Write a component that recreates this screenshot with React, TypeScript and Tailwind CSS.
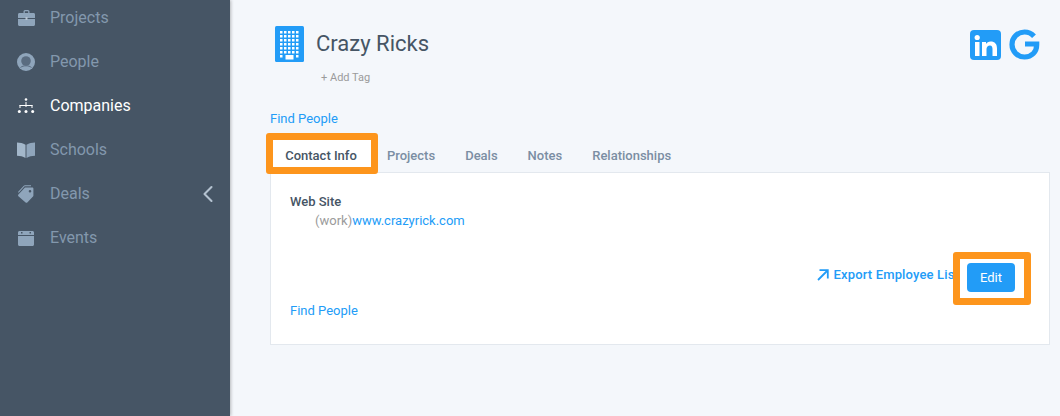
import { ChevronLeft } from "lucide-react";

function ProjectsIcon() {
  return (
    <svg width="17" height="16" viewBox="0 0 17 16" fill="#8fa5bb">
      <path d="M5.500 3V1.600C5.500.8 6.200 0 7 0h3c.8 0 1.500.8 1.500 1.600V3h-1.300V1.500a.3.3 0 0 0-.3-.3H7.100a.3.3 0 0 0-.3.3V3z" />
      <path d="M1.500 3h14c.8 0 1.500.6 1.500 1.400V8H0V4.400C0 3.600.7 3 1.500 3z" />
      <path d="M0 9h17v5.500c0 .8-.7 1.500-1.500 1.500h-14C.7 16 0 15.300 0 14.500z" />
      <rect x="7.500" y="7" width="2" height="3" fill="#b4c2d0" />
    </svg>
  );
}

function PeopleIcon() {
  return (
    <svg width="18" height="18" viewBox="0 0 18 18">
      <circle cx="9" cy="9" r="9" fill="#8fa5bb" />
      <circle cx="9" cy="8" r="4.800" fill="#5a6c80" />
      <path d="M3.500 14.500c1.500-1.300 3.400-1.700 5.500-1.700s4 .4 5.500 1.700" fill="none" stroke="#5a6c80" strokeWidth="1" />
    </svg>
  );
}

function CompaniesIcon() {
  return (
    <svg width="18" height="16" viewBox="0 0 18 16" fill="#ffffff">
      <circle cx="9" cy="1.500" r="1.300" />
      <rect x="8.500" y="4" width="1" height="5" />
      <rect x="2.500" y="7" width="13" height="1" />
      <rect x="2.500" y="7" width="1" height="3" />
      <rect x="14.500" y="7" width="1" height="3" />
      <circle cx="2.300" cy="13.500" r="1.500" />
      <circle cx="9" cy="13.500" r="1.500" />
      <circle cx="15.700" cy="13.500" r="1.500" />
    </svg>
  );
}

function SchoolsIcon() {
  return (
    <svg width="18" height="16" viewBox="0 0 18 16">
      <path d="M0 .5c3 0 6 .7 8.500 2.300V16C6 14.500 3 13.800 0 13.800z" fill="#a3b7ca" />
      <path d="M18 .5c-3 0-6 .7-8.500 2.300V16c2.500-1.500 5.500-2.200 8.500-2.200z" fill="#8fa5bb" />
    </svg>
  );
}

function DealsIcon() {
  return (
    <svg width="18" height="20" viewBox="0 0 18 19" fill="#8fa5bb">
      <path d="M8.500 3h6.800c.6 0 1.100.5 1.100 1.100v6.800c0 .4-.1.700-.4 1l-5.700 6c-.5.500-1.200.500-1.700 0L1.400 11.800c-.5-.5-.5-1.200 0-1.700l6.100-6.700c.3-.3.600-.4 1-.4zm4.500 2.500a1.300 1.300 0 1 0 0 2.600 1.300 1.300 0 0 0 0-2.600z" fillRule="evenodd" />
      <path d="M1 7.500 6.800 1.300C7.100 1 7.500.8 7.900.8H14v.9H8.100c-.3 0-.5.1-.7.300L1.700 8.200z" />
    </svg>
  );
}

function EventsIcon() {
  return (
    <svg width="16" height="15" viewBox="0 0 16 15" fill="#8fa5bb">
      <path d="M1.500 0h13C15.300 0 16 .7 16 1.500V4H0V1.500C0 .7.7 0 1.500 0zM3 1v1.500h1.500V1zm8.500 0v1.500H13V1z" fillRule="evenodd" />
      <path d="M0 5h16v8.500c0 .8-.7 1.500-1.500 1.500h-13C.7 15 0 14.300 0 13.500z" />
    </svg>
  );
}

function BuildingIcon() {
  const dots = [];
  for (let r = 0; r < 6; r++) {
    for (let c = 0; c < 5; c++) {
      dots.push(<rect key={`${r}-${c}`} x={5 + c * 4} y={5 + r * 4} width="2.500" height="2.500" fill="#ffffff" />);
    }
  }
  return (
    <svg width="29" height="36" viewBox="0 0 29 36">
      <rect width="29" height="36" rx="1.500" fill="#229cf7" />
      {dots}
      <rect x="5" y="29" width="2.500" height="2.500" fill="#ffffff" />
      <rect x="21" y="29" width="2.500" height="2.500" fill="#ffffff" />
      <rect x="10.500" y="29" width="8" height="4.500" fill="#ffffff" />
    </svg>
  );
}

function LinkedInIcon() {
  return (
    <svg width="31" height="30" viewBox="0 0 31 30">
      <rect width="31" height="30" rx="4" fill="#229cf7" />
      <circle cx="7.200" cy="7.500" r="2.600" fill="#ffffff" />
      <rect x="5" y="12" width="4.500" height="14" fill="#ffffff" />
      <path d="M12 12h4v2c.9-1.500 2.500-2.400 4.500-2.400 4.500 0 6.500 2.700 6.500 6.900V26h-4.500v-7c0-2.100-.7-3.600-2.500-3.600-2.100 0-3.500 1.500-3.500 3.600v7H12z" fill="#ffffff" />
    </svg>
  );
}

function GoogleIcon() {
  return (
    <svg width="31" height="31" viewBox="0 0 31 31" fill="none">
      <path d="M25 7.200A13 13 0 0 0 15.500 3a12.500 12.500 0 1 0 0 25c7.400 0 12.200-5.200 12.200-12.200v-.8H16" stroke="#229cf7" strokeWidth="5.200" />
    </svg>
  );
}

function ExportIcon() {
  return (
    <svg width="12" height="12" viewBox="0 0 12 12" fill="none" stroke="#229cf7" strokeWidth="1.800">
      <path d="M2.500 1.200h8.300v8.300" />
      <path d="M10.500 1.500 1 11" />
    </svg>
  );
}

const navItems = [
  { label: "Projects", icon: <ProjectsIcon /> },
  { label: "People", icon: <PeopleIcon /> },
  { label: "Companies", icon: <CompaniesIcon />, active: true },
  { label: "Schools", icon: <SchoolsIcon /> },
  { label: "Deals", icon: <DealsIcon />, chevron: true },
  { label: "Events", icon: <EventsIcon /> },
];

export default function App() {
  return (
    <div className="flex h-[416px] w-[1060px] overflow-hidden bg-[#f4f7fb] font-['Roboto',sans-serif]">
      <aside className="z-10 w-[230px] shrink-0 bg-[#465565] shadow-[1px_0_3px_rgba(0,0,0,0.25)]">
        <nav className="-mt-[4px] flex flex-col">
          {navItems.map((item) => (
            <div key={item.label} className="flex h-[44px] items-center pl-[17px] pr-[8px]">
              <span className="flex w-[18px] justify-center">{item.icon}</span>
              <span className={`ml-[15px] flex-1 text-[16px] ${item.active ? "text-white" : "text-[#8398ad]"}`}>
                {item.label}
              </span>
              {item.chevron && <ChevronLeft size={28} strokeWidth={1.800} className="text-[#b4c2d0]" />}
            </div>
          ))}
        </nav>
      </aside>

      <main className="min-w-0 flex-1 pl-[40px] pr-[10px]">
        <div className="flex items-start justify-between pr-[10px] pt-[26px]">
          <div className="flex flex-col">
            <div className="flex items-center pl-[5px]">
              <BuildingIcon />
              <h1 className="ml-[12px] text-[22px] leading-[34px] text-[#465565]">Crazy Ricks</h1>
            </div>
            <div className="mt-[9px] pl-[51px] text-[11px] leading-[14px] text-[#9b9b9b]">+ Add Tag</div>
          </div>
          <div className="flex items-center gap-[8px] pt-[3px]">
            <LinkedInIcon />
            <GoogleIcon />
          </div>
        </div>

        <a className="mt-[26px] block text-[13px] leading-[16px] text-[#229cf7]">Find People</a>

        <div className="relative mt-[10px] flex h-[35px] items-end text-[13px] font-medium text-[#7b8ea3]">
          <div className="relative flex h-[35px] w-[102px] items-center justify-center bg-white pt-[2px] text-[#465565]">
            Contact Info
            <div className="absolute -left-[4px] -right-[6px] -top-[4px] -bottom-[2px] rounded-[3px] border-[7px] border-[#fd951c]" />
          </div>
          <div className="ml-[15px] flex h-[35px] items-center gap-[30px] pt-[2px]">
            <span>Projects</span>
            <span>Deals</span>
            <span>Notes</span>
            <span>Relationships</span>
          </div>
        </div>

        <section className="h-[173px] w-[780px] border border-[#e3e8ee] bg-white pl-[19px] pr-[34px] pt-[20px]">
          <div className="text-[13px] font-medium leading-[18px] text-[#465565]">Web Site</div>
          <div className="mt-[1px] pl-[25px] text-[13px] leading-[18px]">
            <span className="text-[#9b9b9b]">(work)</span>
            <a className="text-[#229cf7]">www.crazyrick.com</a>
          </div>
          <div className="mt-[33px] flex items-center justify-end">
            <a className="mb-[5px] flex items-center text-[13px] font-medium tracking-[0.15px] text-[#229cf7]">
              <ExportIcon />
              <span className="ml-[5px]">Export Employee List</span>
            </a>
            <div className="relative ml-[8px] h-[29px] w-[48px]">
              <div className="absolute -left-[14px] -right-[16px] -top-[11px] -bottom-[13px] rounded-[3px] border-[7px] border-[#fd951c] bg-white" />
              <button className="relative h-[29px] w-[48px] rounded-[4px] bg-[#229cf7] text-[13px] text-white">
                Edit
              </button>
            </div>
          </div>
          <a className="mt-[10px] block text-[13px] leading-[18px] text-[#229cf7]">Find People</a>
        </section>
      </main>
    </div>
  );
}
